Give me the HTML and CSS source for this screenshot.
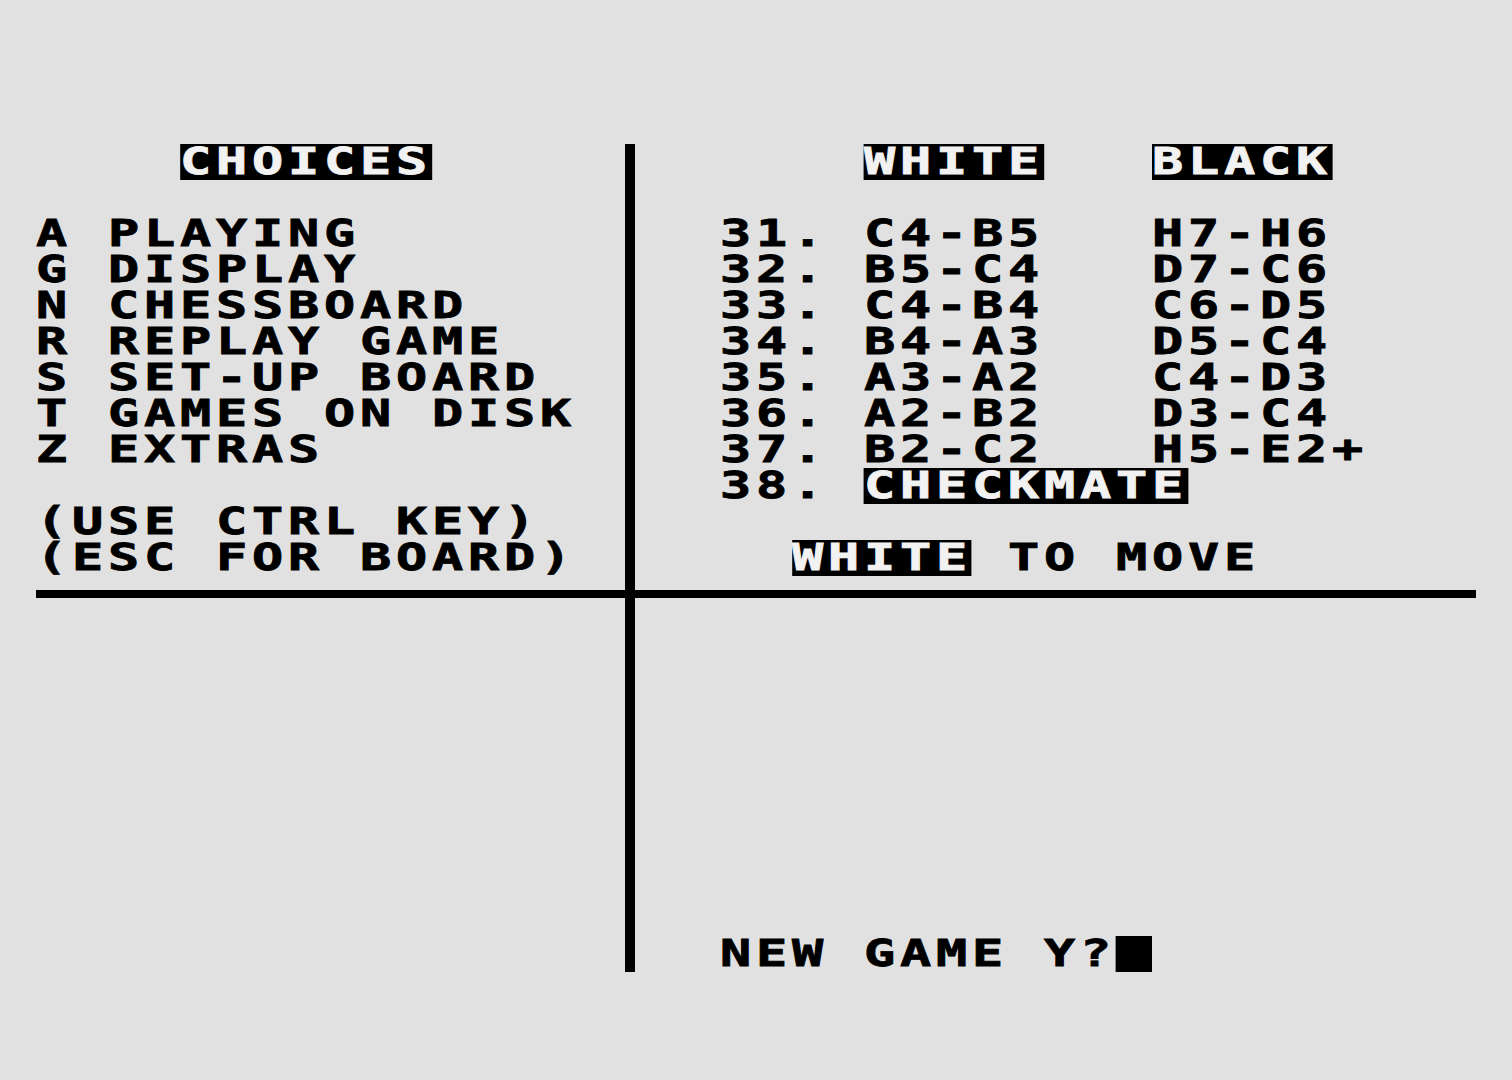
FILE: index.html
```html
<!DOCTYPE html>
<html lang="en">
<head>
    <meta charset="UTF-8">
    <meta name="viewport" content="width=device-width, initial-scale=1.0">
    <title>Chess - Choices</title>
    <link rel="stylesheet" href="styles.css">
</head>
<body>

    <!-- 40 x 30 character screen -->
    <div class="screen">

        <!-- Menu -->
        <div class="panel choices">
            <div class="txt">
                <div class="ln">    <span class="inv">CHOICES</span></div>
                <div class="ln"></div>
                <div class="ln">A PLAYING</div>
                <div class="ln">G DISPLAY</div>
                <div class="ln">N CHESSBOARD</div>
                <div class="ln">R REPLAY GAME</div>
                <div class="ln">S SET-UP BOARD</div>
                <div class="ln">T GAMES ON DISK</div>
                <div class="ln">Z EXTRAS</div>
                <div class="ln"></div>
                <div class="ln">(USE CTRL KEY)</div>
                <div class="ln">(ESC FOR BOARD)</div>
            </div>
        </div>

        <!-- Move list -->
        <div class="panel moves">
            <div class="txt">
                <div class="ln">      <span class="inv">WHITE</span>   <span class="inv">BLACK</span></div>
                <div class="ln"></div>
                <div class="ln">  31. C4-B5   H7-H6</div>
                <div class="ln">  32. B5-C4   D7-C6</div>
                <div class="ln">  33. C4-B4   C6-D5</div>
                <div class="ln">  34. B4-A3   D5-C4</div>
                <div class="ln">  35. A3-A2   C4-D3</div>
                <div class="ln">  36. A2-B2   D3-C4</div>
                <div class="ln">  37. B2-C2   H5-E2+</div>
                <div class="ln">  38. <span class="inv">CHECKMATE</span></div>
                <div class="ln"></div>
                <div class="ln">    <span class="inv">WHITE</span> TO MOVE</div>
            </div>
        </div>

        <!-- Prompt -->
        <div class="panel prompt">
            <div class="txt">
                <div class="ln">  NEW GAME Y?<span class="cursor"> </span></div>
            </div>
        </div>

        <div class="rule-v"></div>
        <div class="rule-h"></div>
    </div>

</body>
</html>
```

FILE: styles.css
```css
/* CSS */
body {
    margin: 0;
    padding: 0;
    background-color: #e1e1e1;
    color: #000;
    height: 1080px;
    overflow: hidden;
}

/* every cell is 36 x 36 */
.screen {
    display: grid;
    grid-template-columns: 576px 36px 828px;
    grid-template-rows: 432px 36px 360px;
    margin: 144px 0 0 36px;
    width: 1440px;
}

.choices {
    grid-column: 1;
    grid-row: 1;
}

.moves {
    grid-column: 3;
    grid-row: 1;
}

.prompt {
    grid-column: 3;
    grid-row: 3;
    display: flex;
    align-items: flex-end;
}

.rule-v {
    grid-column: 2;
    grid-row: 1 / 4;
    justify-self: center;
    width: 10px;
    background-color: #000;
}

.rule-h {
    grid-column: 1 / 4;
    grid-row: 2;
    align-self: center;
    height: 8px;
    background-color: #000;
}

/* mono font stretched wide so one char = 36px */
.txt {
    width: calc(100% / 1.4);
    font-family: "DejaVu Sans Mono", monospace;
    font-weight: bold;
    font-size: 37px;
    line-height: 36px;
    letter-spacing: 3.438px;
    -webkit-text-stroke-width: 0.8px;
    transform: scaleX(1.4);
    transform-origin: 0 0;
}

.ln {
    height: 36px;
    white-space: pre;
}

.inv,
.cursor {
    display: inline-block;
    height: 36px;
    vertical-align: top;
    background-color: #000;
    color: #f2f2f2;
}
```
